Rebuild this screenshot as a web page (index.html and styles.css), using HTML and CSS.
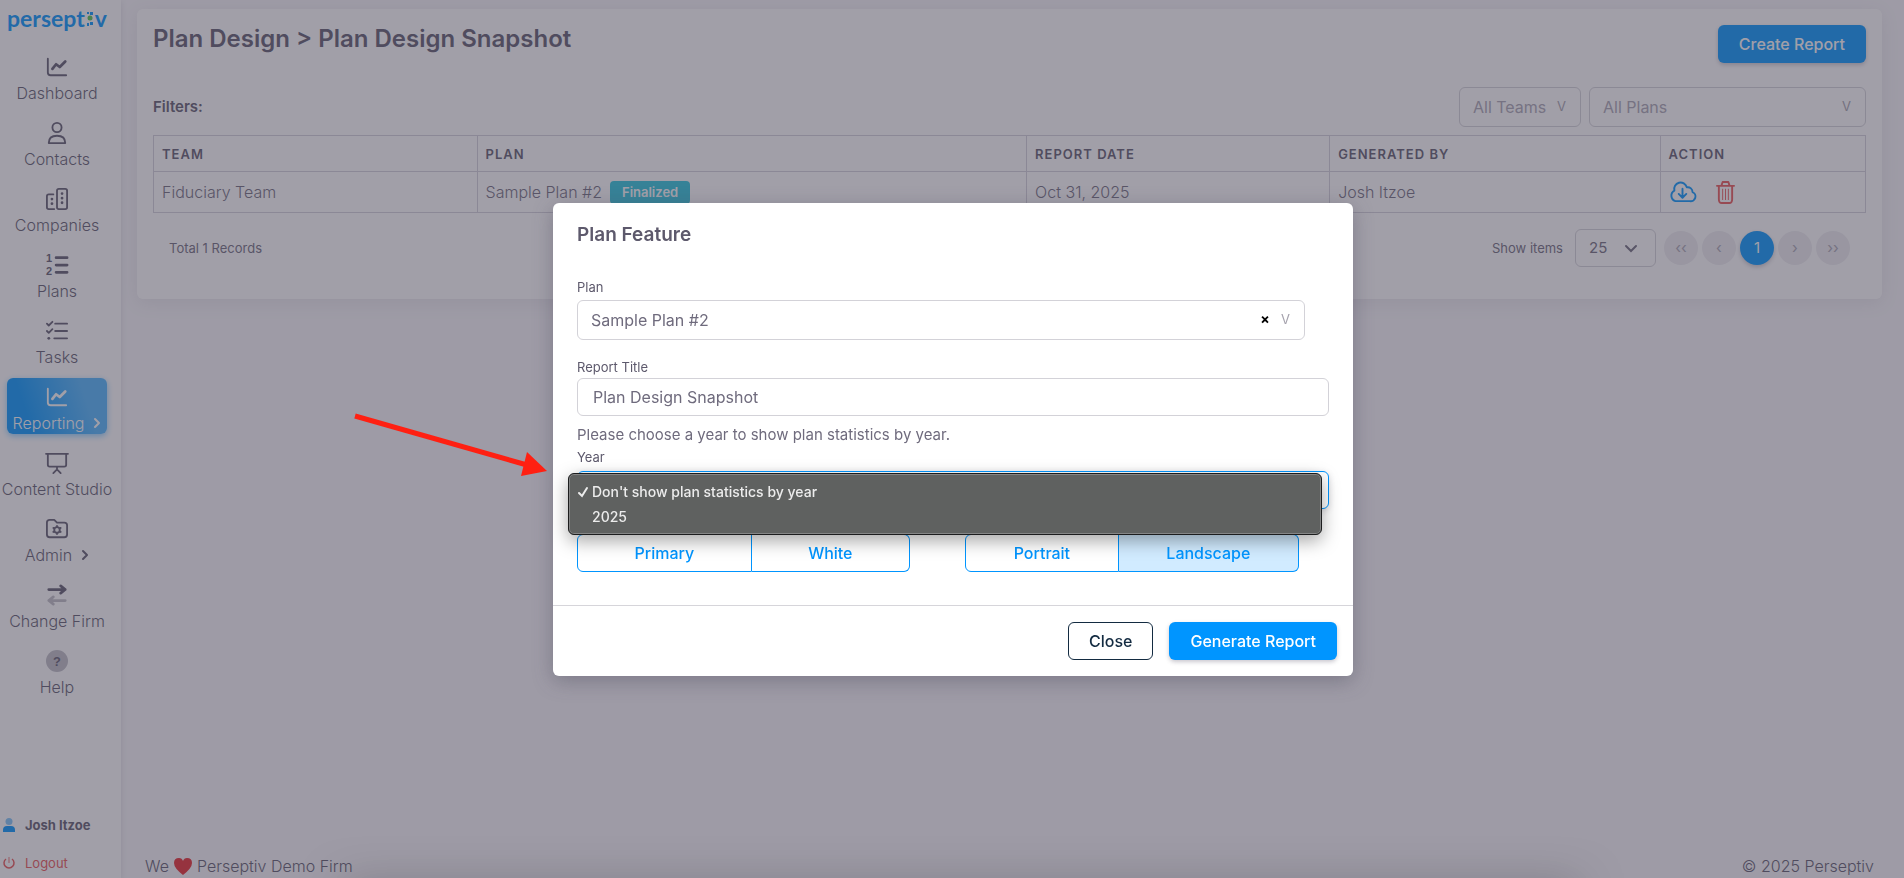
FILE: index.html
```html
<!DOCTYPE html>
<html lang="en">
<head>
<meta charset="utf-8">
<title>Plan Design Snapshot</title>
<link rel="stylesheet" href="styles.css">
</head>
<body>
<div class="app">
  <aside class="sidebar">
    <a class="logo" href="#" aria-label="perseptiv"><span>persept</span><svg class="logo-i" viewBox="0 0 6 15" aria-hidden="true"><path fill="#0095ff" d="M0 1h2v2H0zM3 1h3v3H3zM0 12h2v3H0zM3 11h3v3H3z"/><circle cx="3" cy="7" r="2.500" fill="#54c44a"/></svg><span>v</span></a>
    <nav class="nav">
      <a class="nav-item" href="#"><svg class="icon" viewBox="0 0 24 24"><path d="M2 3v15q0 3 3 3h17" /><path d="m7 14 4-5 4 3 6-6" stroke-width="3"/></svg><span>Dashboard</span></a>
      <a class="nav-item" href="#"><svg class="icon" viewBox="0 0 24 24"><circle cx="12" cy="6" r="5"/><path d="M3 23c0-5 3-8 9-8s9 3 9 8z"/></svg><span>Contacts</span></a>
      <a class="nav-item" href="#"><svg class="icon" viewBox="0 0 24 24"><rect x="12" y="1" width="11" height="22" rx="2"/><path d="M8 7H3q-2 0-2 2v12q0 2 2 2h6"/><path stroke-width="3" d="M17.500 6v.1M17.500 11v.1M17.500 16v.1M6.500 12v.1M6.500 17v.1"/></svg><span>Companies</span></a>
      <a class="nav-item" href="#"><svg class="icon" viewBox="0 0 24 24"><path stroke-width="3" d="M11 4h12M11 12h12M11 20h12"/><text x="0" y="9">1</text><text x="0" y="23">2</text></svg><span>Plans</span></a>
      <a class="nav-item" href="#"><svg class="icon" viewBox="0 0 24 24"><path d="M10 4h13M10 12h13M9 20h14M1 4l2 2 4-4M1 12l2 2 4-4"/><path stroke-width="3" d="M3 20h.1"/></svg><span>Tasks</span></a>
      <a class="nav-item active" href="#"><svg class="icon" viewBox="0 0 24 24"><path d="M2 3v15q0 3 3 3h17"/><path d="m7 14 4-5 4 3 6-6" stroke-width="3"/></svg><span>Reporting<svg class="chev" viewBox="0 0 8 12"><path d="m2 2 4 4-4 4"/></svg></span></a>
      <a class="nav-item" href="#"><svg class="icon" viewBox="0 0 24 24"><path d="M0 2h24M2 3v11q0 2 2 2h16q2 0 2-2V3M12 16v3M8 23l4-4 4 4"/></svg><span>Content Studio</span></a>
      <a class="nav-item" href="#"><svg class="icon" viewBox="0 0 24 24"><path d="M1 5q0-3 3-3h5l3 3h8q3 0 3 3v10q0 3-3 3H4q-3 0-3-3z"/><circle cx="12" cy="13" r="3"/><path d="M12 8.500v1M12 16.500v1M8 10.800l1 .5M15 14.700l1 .5M8 15.200l1-.5M15 11.300l1-.5"/></svg><span>Admin<svg class="chev" viewBox="0 0 8 12"><path d="m2 2 4 4-4 4"/></svg></span></a>
      <a class="nav-item" href="#"><svg class="icon" viewBox="0 0 24 24"><path stroke-width="3" d="M3 6h18M16 2l5 4-5 4"/><path opacity=".4" stroke-width="3" d="M21 18H3M8 14l-5 4 5 4"/></svg><span>Change Firm</span></a>
      <a class="nav-item" href="#"><svg class="icon" viewBox="0 0 24 24"><circle class="help-disc" cx="12" cy="12" r="12"/><text class="help-mark" x="12" y="17" text-anchor="middle">?</text></svg><span>Help</span></a>
    </nav>
    <div class="account">
      <a class="user" href="#"><svg class="mini" viewBox="0 0 12 14"><circle cx="6" cy="3.500" r="3.500" fill="#7fc4f8"/><path fill="#0095ff" d="M0 14v-2q0-4 4-4h4q4 0 4 4v2z"/></svg>Josh Itzoe</a>
      <a class="logout" href="#"><svg class="mini" viewBox="0 0 12 14"><path fill="none" stroke="#ea5455" stroke-width="1.500" d="M3 3a5 5 0 1 0 6 0"/><path stroke="#f3a0a2" stroke-width="1.500" d="M6 1v6"/></svg>Logout</a>
    </div>
  </aside>
  <div class="page">
    <main class="card">
      <header class="card-head">
        <h1>Plan Design &gt; Plan Design Snapshot</h1>
        <button class="btn btn-primary" type="button">Create Report</button>
      </header>
      <div class="filters">
        <strong>Filters:</strong>
        <div class="picker picker-teams"><select aria-label="Teams"><option>All Teams</option></select><span class="vee" aria-hidden="true">V</span></div>
        <div class="picker picker-plans"><select aria-label="Plans"><option>All Plans</option></select><span class="vee" aria-hidden="true">V</span></div>
      </div>
      <table>
        <colgroup><col class="c-team"><col class="c-plan"><col class="c-date"><col class="c-by"><col class="c-act"></colgroup>
        <thead><tr><th>Team</th><th>Plan</th><th>Report Date</th><th>Generated By</th><th>Action</th></tr></thead>
        <tbody><tr>
          <td>Fiduciary Team</td>
          <td><div class="plan-cell">Sample Plan #2<span class="badge">Finalized</span></div></td>
          <td>Oct 31, 2025</td>
          <td>Josh Itzoe</td>
          <td><div class="actions">
            <button type="button" aria-label="Download"><svg class="cloud" viewBox="0 0 28 22"><path d="M6.500 20h15a5 5 0 0 0 3-9.500c0-3-2.500-5.500-6-5A6.500 6.500 0 0 0 5.500 9 6 6 0 0 0 6.500 20z"/><path d="M14 7v9M10 12.500l4 4 4-4"/></svg></button>
            <button type="button" aria-label="Delete"><svg class="trash" viewBox="0 0 20 24"><path stroke-width="2" d="M1 5h18M6 4l1-3h6l1 3M3 6v13q0 4 3 4h8q3 0 3-4V6"/><path d="M7 8.500v11M10 8.500v11M13 8.500v11"/></svg></button>
          </div></td>
        </tr></tbody>
      </table>
      <div class="pager">
        <span class="total">Total 1 Records</span>
        <label for="per-page">Show items</label>
        <div class="picker picker-count"><select id="per-page"><option>25</option></select><svg class="caret" viewBox="0 0 12 8"><path d="m1 1 5 5 5-5"/></svg></div>
        <div class="pages">
          <button type="button" disabled>‹‹</button><button type="button" disabled>‹</button><button class="current" type="button">1</button><button type="button" disabled>›</button><button type="button" disabled>››</button>
        </div>
      </div>
    </main>
    <footer class="foot">
      <span class="love">We <svg class="heart" viewBox="0 0 18 17"><path fill="#e8262d" d="M9 17Q0 10 0 5 0 0 5 0q3 0 4 3 1-3 4-3 5 0 5 5 0 5-9 12z"/></svg> Perseptiv Demo Firm</span>
      <span>© 2025 Perseptiv</span>
    </footer>
  </div>
</div>

<div class="backdrop">
  <section class="modal" role="dialog" aria-modal="true" aria-labelledby="dlg-title">
    <div class="modal-body">
      <h2 id="dlg-title">Plan Feature</h2>
      <label class="lbl" for="plan">Plan</label>
      <div class="picker picker-modal"><select id="plan"><option>Sample Plan #2</option></select><button class="clear" type="button" aria-label="Clear">×</button><span class="vee" aria-hidden="true">V</span></div>
      <label class="lbl lbl-next" for="title">Report Title</label>
      <input class="field" id="title" type="text" value="Plan Design Snapshot">
      <p class="hint">Please choose a year to show plan statistics by year.</p>
      <label class="lbl" for="year">Year</label>
      <div class="year">
        <select class="field year-select" id="year"><option>Don't show plan statistics by year</option><option>2025</option></select>
        <ul class="menu" role="listbox" aria-label="Year">
          <li role="option" aria-selected="true"><svg class="tick" viewBox="0 0 10 12"><path d="m1 7 3 3 5-8"/></svg>Don't show plan statistics by year</li>
          <li role="option" aria-selected="false">2025</li>
        </ul>
      </div>
      <div class="groups">
        <div class="group group-color"><button type="button">Primary</button><button type="button">White</button></div>
        <div class="group group-layout"><button type="button">Portrait</button><button class="on" type="button">Landscape</button></div>
      </div>
    </div>
    <div class="modal-foot">
      <button class="btn btn-outline" type="button">Close</button>
      <button class="btn btn-primary" type="button">Generate Report</button>
    </div>
    <svg class="arrow" viewBox="0 0 196 64" aria-hidden="true"><path fill="none" stroke="#ff2012" stroke-width="5" d="M3 5l172 49"/><path fill="#ff2012" d="M195 60l-20-19-6 24z"/></svg>
  </section>
  <div class="dock-shadow"></div>
</div>
</body>
</html>
```
FILE: styles.css
```css
* { box-sizing: border-box; }
body {
  margin: 0;
  background: #f8f7fa;
  color: #6f6b7d;
  font: 16px/22px Inter, "Open Sans", sans-serif;
  overflow: hidden;
}
a { color: inherit; text-decoration: none; }
h1, h2, p, ul { margin: 0; padding: 0; }
button, input, select { font: inherit; color: inherit; margin: 0; }
svg { flex: none; overflow: visible; }

.app { display: flex; min-height: 100vh; }
.sidebar {
  display: flex;
  flex-direction: column;
  flex: none;
  width: 121px;
  padding: 0 7px;
  background: #fff;
  box-shadow: 0 2px 6px rgba(75, 70, 92, .16);
}
.logo {
  display: flex;
  align-items: center;
  gap: 2px;
  height: 36px;
  margin-bottom: 12px;
  color: #0095ff;
  font: 700 23px/36px Lato, sans-serif;
}
.logo-i { width: 6px; height: 15px; }
.nav { display: flex; flex-direction: column; gap: 10px; width: 100px; }
.nav-item {
  display: flex;
  flex-direction: column;
  align-items: center;
  gap: 4px;
  height: 56px;
  padding-top: 8px;
  border-radius: 6px;
  color: #5d596c;
  font-weight: 300;
  white-space: nowrap;
}
.nav-item span { display: flex; align-items: center; gap: 9px; }
.icon { width: 22px; height: 22px; fill: none; stroke: currentColor; stroke-width: 2; stroke-linecap: round; stroke-linejoin: round; }
.icon text { fill: currentColor; stroke: none; font: 700 12px "Liberation Sans", sans-serif; }
.icon .help-disc { fill: #bebdc5; stroke: none; }
.icon .help-mark { font-size: 14px; }
.chev { width: 8px; height: 12px; fill: none; stroke: currentColor; stroke-width: 2; stroke-linecap: round; stroke-linejoin: round; }
.active { color: #fff; background: linear-gradient(72deg, #0095ff 22%, #4db5ff 77%); box-shadow: 0 2px 6px rgba(0, 149, 255, .48); }
.account { display: flex; flex-direction: column; gap: 16px; margin: auto -4px 4px; font-size: 13px; }
.account a { display: flex; align-items: center; gap: 10px; }
.mini { width: 12px; height: 14px; }
.user { font-weight: 700; color: #5d596c; }
.logout { color: #ea5455; }

.page { display: flex; flex-direction: column; flex: 1; min-width: 0; padding: 9px 22px 0 16px; }
.card {
  padding: 16px 16px 32px;
  border-radius: 6px;
  background: #fff;
  box-shadow: 0 4px 18px rgba(75, 70, 92, .1);
}
.card-head { display: flex; justify-content: space-between; }
h1 { color: #5d596c; font-size: 24px; line-height: 28px; font-weight: 600; }
.btn {
  height: 38px;
  padding: 0 20px;
  border: 1px solid transparent;
  border-radius: 6px;
  font-weight: 500;
}
.btn-primary { background: #0095ff; color: #fff; box-shadow: 0 2px 4px rgba(75, 70, 92, .3); }
.btn-outline { background: #fff; color: #132b41; border-color: #132b41; }
.filters { display: flex; align-items: center; gap: 8px; margin: 24px 0 8px; }
.filters strong { margin-right: auto; font-size: 15px; font-weight: 600; color: #5d596c; }
.picker { position: relative; }
.picker select, .field {
  display: block;
  width: 100%;
  height: 40px;
  padding: 0 13px;
  border: 1px solid #d3d2d8;
  border-radius: 6px;
  background: #fff;
  appearance: none;
}
.filters .picker { color: #a8a5b2; }
.picker-teams { width: 122px; }
.picker-plans { width: 277px; }
.vee { position: absolute; right: 15px; top: 8px; color: #a5a2ad; font: 13px/22px Inter, sans-serif; pointer-events: none; }

table { width: 100%; table-layout: fixed; border-collapse: collapse; }
.c-team { width: 18.9%; }
.c-plan { width: 32.1%; }
.c-date { width: 17.7%; }
.c-by { width: 19.3%; }
.c-act { width: 12%; }
th, td { border: 1px solid #d3d1da; text-align: left; padding: 0 8px; }
th { height: 36px; color: #5d596c; font-size: 13px; font-weight: 600; letter-spacing: 1px; text-transform: uppercase; }
td { height: 41px; font-weight: 300; }
.plan-cell { display: flex; align-items: center; gap: 8px; }
.badge { padding: 0 12px; border-radius: 4px; background: #29c4dc; color: #fff; font-size: 13px; line-height: 23px; font-weight: 600; }
.actions { display: flex; align-items: center; gap: 20px; }
.actions button { display: flex; padding: 0; border: 0; background: none; }
.actions svg { fill: none; stroke-linecap: round; stroke-linejoin: round; }
.cloud { width: 27px; height: 21px; stroke: #0095ff; stroke-width: 2; }
.trash { width: 19px; height: 23px; stroke: #ea5455; stroke-width: 1; }

.pager { display: flex; align-items: center; gap: 8px; padding: 16px 16px 0; font-size: 13px; }
.total { margin-right: auto; }
.pager label { margin-right: 4px; }
.picker-count { width: 81px; font-size: 15px; }
.picker-count select { height: 38px; }
.caret { position: absolute; right: 19px; top: 16px; width: 12px; height: 8px; fill: none; stroke: #6f6b7d; stroke-width: 2; stroke-linecap: round; }
.pages { display: flex; gap: 4px; font-size: 15px; }
.pages button { width: 34px; height: 34px; padding: 0; border: 0; border-radius: 50%; background: #eeedf1; color: #a8a5b2; }
.pages .current { background: #0095ff; color: #fff; box-shadow: 0 2px 4px rgba(75, 70, 92, .3); }

.foot { display: flex; justify-content: space-between; margin-top: auto; padding: 0 8px 1px; font-weight: 300; color: #5d596c; }
.love { display: flex; align-items: center; gap: 5px; }
.heart { width: 18px; height: 17px; }

.backdrop {
  position: fixed;
  inset: 0;
  display: flex;
  align-items: center;
  justify-content: center;
  padding-left: 2px;
  background: rgba(67, 63, 82, .5);
}
.modal {
  position: relative;
  width: 800px;
  max-width: 100%;
  border-radius: 6px;
  background: #fff;
  box-shadow: 0 5px 20px rgba(75, 70, 92, .4);
}
.modal-body { padding: 20px 24px 33px; border-bottom: 1px solid #d6d5da; }
h2 { margin-bottom: 30px; color: #5d596c; font-size: 19px; line-height: 24px; font-weight: 600; }
.lbl { display: block; margin-bottom: 3px; font-size: 13px; line-height: 20px; color: #5d596c; }
.lbl-next { margin: 17px 0 1px; }
.picker-modal { margin-right: 24px; }
.picker-modal .clear { position: absolute; right: 32px; top: 10px; width: 16px; padding: 0; border: 0; background: none; color: #000; font: 700 14px/18px Inter, sans-serif; }
.field { height: 38px; padding: 0 15px; }
.hint { margin: 8px 0 1px; font-size: 15px; }
.year { position: relative; margin-top: 4px; }
.year-select { border-color: #0095ff; box-shadow: 0 2px 6px rgba(75, 70, 92, .2); }
.menu {
  position: absolute;
  left: -9px;
  right: 7px;
  top: 2px;
  padding: 5px 0;
  border: 1px solid #1c1d1e;
  border-radius: 6px;
  background: #5f6160;
  box-shadow: inset 0 0 0 1px #858686, 0 6px 18px rgba(0, 0, 0, .35);
  color: #ececec;
  font-size: 14px;
  font-weight: 500;
  list-style: none;
}
.menu li { position: relative; padding-left: 23px; line-height: 25px; }
.tick { position: absolute; left: 9px; top: 7px; width: 10px; height: 12px; fill: none; stroke: #ececec; stroke-width: 2; stroke-linecap: round; }
.groups { display: flex; gap: 55px; margin-top: 25px; }
.group { display: flex; }
.group-color { width: 333px; }
.group-layout { width: 334px; }
.group button { flex: auto; height: 38px; padding: 0; border: 1px solid #0095ff; background: #fff; color: #0095ff; font-weight: 500; }
.group button:first-child { border-radius: 6px 0 0 6px; }
.group button:last-child { border-left: 0; border-radius: 0 6px 6px 0; }
.group .on { background: #d1ebff; }
.modal-foot { display: flex; justify-content: flex-end; gap: 16px; padding: 16px; }
.arrow { position: absolute; left: -201px; top: 208px; width: 196px; height: 64px; }
.dock-shadow { position: absolute; left: 18%; right: 17%; bottom: -20px; height: 10px; box-shadow: 0 0 44px rgba(0, 0, 0, .5); }
```
